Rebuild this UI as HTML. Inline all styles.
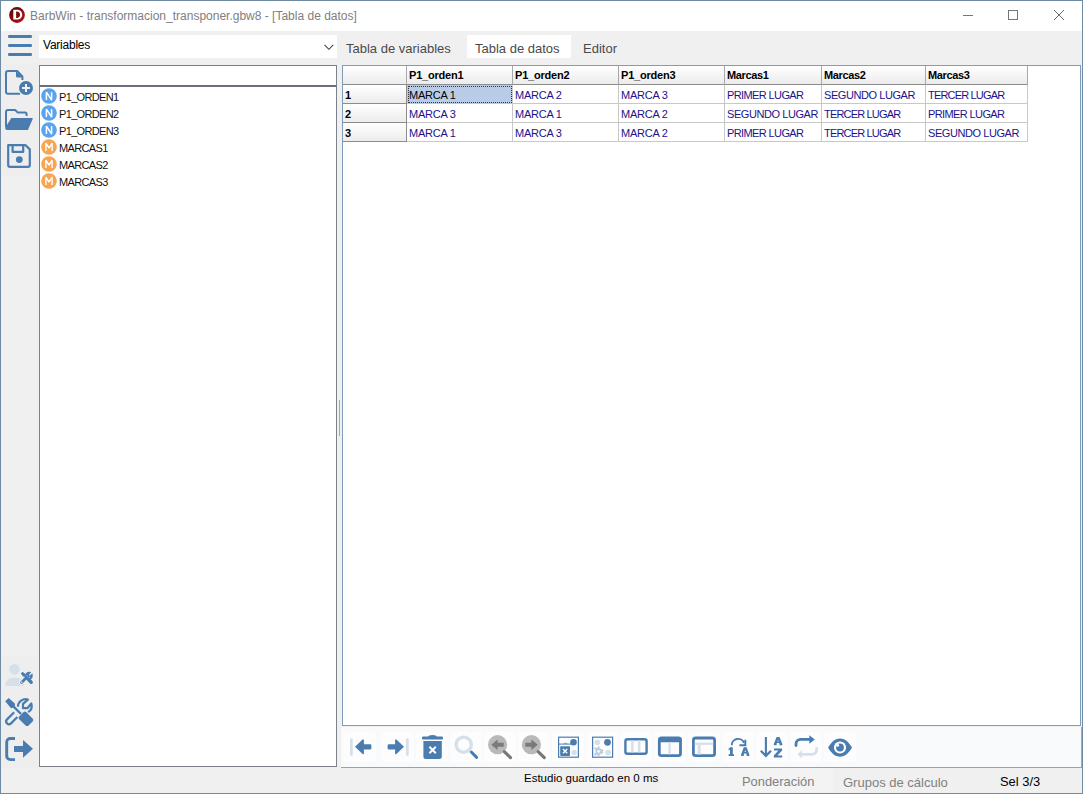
<!DOCTYPE html>
<html><head><meta charset="utf-8">
<style>
*{margin:0;padding:0;box-sizing:border-box}
html,body{width:1083px;height:794px;overflow:hidden;background:#f0f0f0;font-family:"Liberation Sans",sans-serif;position:relative}
.a{position:absolute}
.t{position:absolute;white-space:nowrap;line-height:1}
#win{left:0;top:0;width:1083px;height:794px;border:1px solid #6f8aa3;}
#title{left:1px;top:1px;width:1081px;height:30px;background:#fff}
.hb{left:8px;width:24px;height:2.5px;background:#4a7cb0;border-radius:1.25px}
#dd{left:39px;top:35px;width:298px;height:23px;background:#fff}
#search{left:39px;top:65px;width:298px;height:22px;background:#fff;border:1px solid #7c818a;border-bottom:2px solid #6d7078}
#list{left:39px;top:87px;width:298px;height:680px;background:#fff;border:1px solid #7c818a;border-top:none}
#grid{left:342px;top:65px;width:739px;height:661px;background:#fff;border:1px solid #7f9db9}
#tabact{left:467px;top:35px;width:104px;height:23px;background:#fff}
#tbar{left:341px;top:727px;width:741px;height:41px;background:#f8fafc;border-bottom:1px solid #a0a0a0;border-right:1px solid #a8a8a8}
.btn{top:732px;width:32px;height:30px;background:#fcfdfd;border-radius:2px}
.ic{position:absolute}
.li{left:41px;width:16px;height:16px;border-radius:50%;color:#fff;font-weight:normal;font-size:11px;text-align:center;line-height:16px}
.ln{background:#5aa4ee}
.lm{background:#f7a553}
.lt{left:59px;font-size:11px;color:#111;letter-spacing:-0.65px}
.hd{position:absolute;top:66px;height:19px;background:linear-gradient(#ffffff,#ececec);border-right:1px solid #a8a8a8;border-bottom:1px solid #8c8c8c;font-weight:bold;font-size:11px;color:#000;padding-left:2px;line-height:18px;letter-spacing:-0.25px}
.rh{position:absolute;left:343px;width:64px;height:19px;background:linear-gradient(#ffffff,#ececec);border-right:1px solid #8c8c8c;border-bottom:1px solid #8c8c8c;font-weight:bold;font-size:11px;color:#000;padding-left:2px;padding-top:1px;line-height:19px}
.c{position:absolute;height:19px;border-right:1px solid #c8c8c8;border-bottom:1px solid #c8c8c8;font-size:11px;color:#1c128c;padding-left:2px;padding-top:1px;line-height:19px;letter-spacing:-0.5px;white-space:nowrap;overflow:hidden}
.sel{background:#b8cce8;color:#000}
.sel::after{content:"";position:absolute;left:1px;top:1px;right:0;bottom:0;border:1px dotted #333}
</style></head><body>
<div id="title" class="a"></div>
<div class="a" style="left:1px;top:63px;width:37px;height:112px;background:#eeeeee"></div>
<div class="a" style="left:1px;top:657px;width:37px;height:111px;background:#eeeeee"></div>
<!-- logo -->
<svg class="a" style="left:8px;top:6px" width="18" height="18" viewBox="0 0 18 18">
<defs><linearGradient id="lg" x1="0" y1="0" x2="1" y2="1"><stop offset="0" stop-color="#4a0508"/><stop offset="0.5" stop-color="#8a0a10"/><stop offset="1" stop-color="#c8141c"/></linearGradient></defs>
<circle cx="9" cy="9" r="7.9" fill="url(#lg)"/>
<path d="M5.3 3.8H8.8C12 3.8 14.2 5.8 14.2 8.7C14.2 11.6 12 13.6 8.8 13.6H5.3Z" fill="#fff"/>
<path d="M8.1 5.6H8.8C10.8 5.6 12.1 6.9 12.1 8.75C12.1 10.6 10.8 11.9 8.8 11.9H8.1Z" fill="#7a0a0e"/>
</svg>
<div class="t" style="left:30px;top:10px;font-size:12px;color:#808080">BarbWin - transformacion_transponer.gbw8 - [Tabla de datos]</div>
<!-- window controls -->
<div class="a" style="left:963px;top:15px;width:10px;height:1px;background:#767676"></div>
<div class="a" style="left:1008px;top:10px;width:10px;height:10px;border:1px solid #767676"></div>
<svg class="a" style="left:1054px;top:10px" width="10" height="10"><path d="M0 0L10 10M10 0L0 10" stroke="#6a6a6a" stroke-width="1"/></svg>

<!-- hamburger -->
<div class="a hb" style="top:35.4px"></div>
<div class="a hb" style="top:44.4px"></div>
<div class="a hb" style="top:53px"></div>

<div id="dd" class="a"></div>
<div class="t" style="left:43px;top:39px;font-size:12px;color:#000;letter-spacing:-0.23px">Variables</div>
<svg class="a" style="left:324px;top:44px" width="10" height="7"><path d="M0.5 0.8L4.9 5.3L9.3 0.8" stroke="#444" stroke-width="1.1" fill="none"/></svg>

<div id="search" class="a"></div>
<div id="list" class="a"></div>

<svg class="a" style="left:0;top:0" width="340" height="200" viewBox="0 0 340 200">
<circle cx="49" cy="96" r="7.8" fill="#5aa4ee"/><path d="M46.4 100V92.2L51.6 100V92.2" fill="none" stroke="#fff" stroke-width="1.5" stroke-linejoin="bevel"/>
<circle cx="49" cy="113" r="7.8" fill="#5aa4ee"/><path d="M46.4 117V109.2L51.6 117V109.2" fill="none" stroke="#fff" stroke-width="1.5" stroke-linejoin="bevel"/>
<circle cx="49" cy="130" r="7.8" fill="#5aa4ee"/><path d="M46.4 134V126.2L51.6 134V126.2" fill="none" stroke="#fff" stroke-width="1.5" stroke-linejoin="bevel"/>
<circle cx="49" cy="147" r="7.8" fill="#f7a553"/><path d="M45.9 151V143.2L49 148L52.1 143.2V151" fill="none" stroke="#fff" stroke-width="1.4" stroke-linejoin="bevel"/>
<circle cx="49" cy="164" r="7.8" fill="#f7a553"/><path d="M45.9 168V160.2L49 165L52.1 160.2V168" fill="none" stroke="#fff" stroke-width="1.4" stroke-linejoin="bevel"/>
<circle cx="49" cy="181" r="7.8" fill="#f7a553"/><path d="M45.9 185V177.2L49 182L52.1 177.2V185" fill="none" stroke="#fff" stroke-width="1.4" stroke-linejoin="bevel"/>
</svg>
<!-- tabs -->
<div id="tabact" class="a"></div>
<div class="t" style="left:346px;top:42px;font-size:13px;color:#4a4a4a">Tabla de variables</div>
<div class="t" style="left:475px;top:42px;font-size:13px;color:#4a4a4a">Tabla de datos</div>
<div class="t" style="left:583px;top:42px;font-size:13px;color:#4a4a4a">Editor</div>

<div class="a" style="left:1px;top:768px;width:1081px;height:25px;background:#f0f0f0"></div>
<div class="a" style="left:660px;top:768px;width:173px;height:25px;background:#f3f3f3"></div>
<div class="t" style="left:524px;top:773px;font-size:11.5px;color:#000">Estudio guardado en 0 ms</div>
<div class="t" style="left:742px;top:776px;font-size:12.9px;color:#808080">Ponderación</div>
<div class="t" style="left:843px;top:776px;font-size:13px;color:#808080">Grupos de cálculo</div>
<div class="t" style="left:1000px;top:776px;font-size:12.9px;color:#000">Sel 3/3</div>
<div id="grid" class="a"></div>
<div class="a" style="left:339px;top:400px;width:1px;height:36px;background:#a8a8a8"></div>
<div id="tbar" class="a"></div>
<div class="t lt" style="top:92px">P1_ORDEN1</div>
<div class="t lt" style="top:109px">P1_ORDEN2</div>
<div class="t lt" style="top:126px">P1_ORDEN3</div>
<div class="t lt" style="top:143px">MARCAS1</div>
<div class="t lt" style="top:160px">MARCAS2</div>
<div class="t lt" style="top:177px">MARCAS3</div>
<div class="hd" style="left:343px;width:64px"></div>
<div class="hd" style="left:407px;width:106px;letter-spacing:-0.2px">P1_orden1</div>
<div class="hd" style="left:513px;width:106px;letter-spacing:-0.2px">P1_orden2</div>
<div class="hd" style="left:619px;width:106px;letter-spacing:-0.2px">P1_orden3</div>
<div class="hd" style="left:725px;width:97px;letter-spacing:-0.34px">Marcas1</div>
<div class="hd" style="left:822px;width:104px;letter-spacing:-0.34px">Marcas2</div>
<div class="hd" style="left:926px;width:102px;letter-spacing:-0.34px">Marcas3</div>
<div class="rh" style="top:85px">1</div>
<div class="c sel" style="left:407px;top:85px;width:106px;letter-spacing:-0.24px">MARCA 1</div>
<div class="c" style="left:513px;top:85px;width:106px;letter-spacing:-0.24px">MARCA 2</div>
<div class="c" style="left:619px;top:85px;width:106px;letter-spacing:-0.24px">MARCA 3</div>
<div class="c" style="left:725px;top:85px;width:97px;letter-spacing:-0.61px">PRIMER LUGAR</div>
<div class="c" style="left:822px;top:85px;width:104px;letter-spacing:-0.43px">SEGUNDO LUGAR</div>
<div class="c" style="left:926px;top:85px;width:102px;letter-spacing:-0.82px">TERCER LUGAR</div>
<div class="rh" style="top:104px">2</div>
<div class="c" style="left:407px;top:104px;width:106px;letter-spacing:-0.24px">MARCA 3</div>
<div class="c" style="left:513px;top:104px;width:106px;letter-spacing:-0.24px">MARCA 1</div>
<div class="c" style="left:619px;top:104px;width:106px;letter-spacing:-0.24px">MARCA 2</div>
<div class="c" style="left:725px;top:104px;width:97px;letter-spacing:-0.43px">SEGUNDO LUGAR</div>
<div class="c" style="left:822px;top:104px;width:104px;letter-spacing:-0.82px">TERCER LUGAR</div>
<div class="c" style="left:926px;top:104px;width:102px;letter-spacing:-0.61px">PRIMER LUGAR</div>
<div class="rh" style="top:123px">3</div>
<div class="c" style="left:407px;top:123px;width:106px;letter-spacing:-0.24px">MARCA 1</div>
<div class="c" style="left:513px;top:123px;width:106px;letter-spacing:-0.24px">MARCA 3</div>
<div class="c" style="left:619px;top:123px;width:106px;letter-spacing:-0.24px">MARCA 2</div>
<div class="c" style="left:725px;top:123px;width:97px;letter-spacing:-0.61px">PRIMER LUGAR</div>
<div class="c" style="left:822px;top:123px;width:104px;letter-spacing:-0.82px">TERCER LUGAR</div>
<div class="c" style="left:926px;top:123px;width:102px;letter-spacing:-0.43px">SEGUNDO LUGAR</div>
<svg class="a" style="left:0;top:0" width="1083" height="794" viewBox="0 0 1083 794">
<!-- left toolbar -->
<g fill="none" stroke="#4a7cb0" stroke-width="2" stroke-linejoin="round">
<path d="M20 93.8H8a2 2 0 0 1-2-2V73a2 2 0 0 1 2-2H17.2L22.4 76.5V80"/>
<path d="M6 127V112a2 2 0 0 1 2-2H15.2L17.8 112.6H25a1.6 1.6 0 0 1 1.6 1.6V116"/>
<path d="M8.2 145.2H25.6L29.8 149.4V165a1.8 1.8 0 0 1-1.8 1.8H10a1.8 1.8 0 0 1-1.8-1.8Z" stroke-width="2.2"/>
<path d="M12.6 145.2V151.9H23.2V145.2" stroke-width="2.2"/>
</g>
<g fill="#4a7cb0">
<path d="M16 71.2V76a1.6 1.6 0 0 0 1.6 1.6H23.2Z"/>
<circle cx="26" cy="88" r="7.6" stroke="#f0f0f0" stroke-width="1.2"/>
<path d="M5.3 127.5L11.3 118H32a0.8 0.8 0 0 1 0.7 1.1L27.9 130H7a1.8 1.8 0 0 1-1.8-1.8Z"/>
<circle cx="19.3" cy="159.6" r="3.4"/>
</g>
<path d="M22 88H30M26 84V92" stroke="#f0f0f0" stroke-width="2"/>
<!-- user tools -->
<g fill="#d6e0eb"><circle cx="14.5" cy="669.3" r="5.4"/><path d="M5 686C5 680.5 9 677.4 14.5 677.4S24 680.5 24 686Z"/></g>
<g fill="none" stroke="#f0f0f0" stroke-width="5" stroke-linecap="round"><path d="M22 673.5L31.3 682.3M21.4 682.6L28 676"/></g>
<g fill="#4a7cb0">
<path d="M20.8 673.6L22.6 671.8L25.8 674.6L25.2 676.6L23 676.6Z"/>
</g>
<g stroke="#4a7cb0" fill="none" stroke-linecap="round">
<path d="M24.5 675.5L27 678" stroke-width="1.3"/>
<path d="M27.4 678.4L31.2 682.2" stroke-width="3.4"/>
<path d="M21.6 682.4L26.2 677.8" stroke-width="2.8"/>
<path d="M26.2 677.6A3.4 3.4 0 0 1 29.6 672.6L28 674.8L28.4 676.2L30 676.6L31.8 675A3.4 3.4 0 0 1 28.2 679.2" stroke-width="1.8" stroke-linecap="butt"/>
</g>
<circle cx="21.8" cy="682.2" r="0.8" fill="#f0f0f0"/>
<!-- tools big -->
<g fill="#4a7cb0">
<path d="M5.2 701.3L8.6 698.1L14.9 703.6L14.9 707L11 708.3Z"/>
<path d="M13 706L21 714" stroke="#4a7cb0" stroke-width="2.4"/>
<path d="M19.2 716.4L23.4 712.2a2.2 2.2 0 0 1 3 0L32.6 718.4a2.2 2.2 0 0 1 0 3L28.6 725.4a2.2 2.2 0 0 1-3 0L19.2 719.2a2 2 0 0 1 0-2.8Z"/>
</g>
<g fill="none" stroke="#4a7cb0" stroke-width="2.2" stroke-linecap="butt" stroke-linejoin="round">
<path d="M14.2 712.2L7 719.4a2.8 2.8 0 0 0 4 4L17.4 717"/>
<path d="M17.9 706.6A7.6 7.6 0 0 1 27.9 699.6L23 703.8V708.2H27.4L31.3 703.5A7.6 7.6 0 0 1 28.2 712.2"/>
</g>
<!-- exit -->
<path d="M15 738.5H10.3a3.6 3.6 0 0 0-3.6 3.6V756a3.6 3.6 0 0 0 3.6 3.6H15" fill="none" stroke="#4a7cb0" stroke-width="2.9"/>
<path d="M14 745.9H23V739.9L33 748.8L23 757.7V751.9H14Z" fill="#4a7cb0"/>

<!-- bottom toolbar buttons bg -->
<g fill="#fdfdfe">
<rect x="344" y="732" width="32" height="30" rx="3"/><rect x="382" y="732" width="32" height="30" rx="3"/><rect x="416" y="732" width="32" height="30" rx="3"/>
<rect x="450" y="732" width="32" height="30" rx="3"/><rect x="484" y="732" width="32" height="30" rx="3"/><rect x="518" y="732" width="32" height="30" rx="3"/>
<rect x="552" y="732" width="32" height="30" rx="3"/><rect x="586" y="732" width="32" height="30" rx="3"/><rect x="620" y="732" width="32" height="30" rx="3"/>
<rect x="654" y="732" width="32" height="30" rx="3"/><rect x="688" y="732" width="32" height="30" rx="3"/><rect x="722" y="732" width="32" height="30" rx="3"/>
<rect x="756" y="732" width="32" height="30" rx="3"/><rect x="790" y="732" width="32" height="30" rx="3"/><rect x="824" y="732" width="32" height="30" rx="3"/>
</g>
<!-- 1 first -->
<rect x="350" y="738.3" width="2.8" height="17.7" rx="1.4" fill="#d6e0eb"/>
<path d="M355 746.8L362.6 739.5a0.8 0.8 0 0 1 1.3 0.6V744.2H370a1.4 1.4 0 0 1 1.4 1.4V748.2a1.4 1.4 0 0 1-1.4 1.4H363.9V753.5a0.8 0.8 0 0 1-1.3 0.6Z" fill="#4a7cb0"/>
<!-- 2 last -->
<rect x="406" y="738.3" width="2.8" height="17.7" rx="1.4" fill="#d6e0eb"/>
<path d="M404 746.8L396.4 739.5a0.8 0.8 0 0 0-1.3 0.6V744.2H389a1.4 1.4 0 0 0-1.4 1.4V748.2a1.4 1.4 0 0 0 1.4 1.4H395.1V753.5a0.8 0.8 0 0 0 1.3 0.6Z" fill="#4a7cb0"/>
<!-- 3 trash -->
<g fill="#4a7cb0">
<rect x="422" y="736.6" width="21" height="2.8" rx="1.2"/>
<path d="M428 737.2Q428.5 735 432.5 735T437 737.2Z"/>
<path d="M423.4 741H441.8V756.8a2.2 2.2 0 0 1-2.2 2.2H425.6a2.2 2.2 0 0 1-2.2-2.2Z"/>
</g>
<path d="M429.4 746.8L435.8 753.2M435.8 746.8L429.4 753.2" stroke="#fff" stroke-width="2"/>
<!-- 4 magnifier light -->
<circle cx="463.7" cy="744.7" r="7.6" fill="none" stroke="#d6e0eb" stroke-width="3.4"/>
<path d="M471.3 752L476.6 757.4" stroke="#4a7cb0" stroke-width="3" stroke-linecap="round"/>
<!-- 5 mag left -->
<circle cx="497.6" cy="744.7" r="9.6" fill="#b9b9b9"/>
<path d="M504.3 751.6L510.5 757.6" stroke="#777" stroke-width="3.2" stroke-linecap="round"/>
<path d="M491.3 744.7L497.6 739.5V742.7H503.7V746.7H497.6V750Z" fill="#7a7a7a"/>
<!-- 6 mag right -->
<circle cx="531.4" cy="744.7" r="9.6" fill="#b9b9b9"/>
<path d="M538.1 751.6L544.3 757.6" stroke="#777" stroke-width="3.2" stroke-linecap="round"/>
<path d="M537.8 744.7L531.4 739.5V742.7H525.3V746.7H531.4V750Z" fill="#7a7a7a"/>
<!-- 7 grid trash -->
<rect x="558.6" y="737.2" width="19.8" height="20" fill="none" stroke="#4a7cb0" stroke-width="1.2"/>
<circle cx="573.5" cy="742.3" r="3.3" fill="#4a7cb0"/>
<circle cx="574.1" cy="752.4" r="2.7" fill="#d6e0eb"/>
<path d="M559 744.1H572" stroke="#4a7cb0" stroke-width="1"/>
<path d="M563 743.6Q565.5 742 568 743.6Z" fill="#4a7cb0"/>
<path d="M560.2 746.2H570V755a1 1 0 0 1-1 1H561.2a1 1 0 0 1-1-1Z" fill="#4a7cb0"/>
<path d="M563 749L567.2 753.2M567.2 749L563 753.2" stroke="#fff" stroke-width="1.4"/>
<!-- 8 grid gear -->
<rect x="592.6" y="737.2" width="20" height="20" fill="none" stroke="#4a7cb0" stroke-width="1.2"/>
<circle cx="597.4" cy="742.3" r="2.8" fill="#d6e0eb"/>
<circle cx="607.5" cy="742.3" r="3.4" fill="#4a7cb0"/>
<circle cx="608.1" cy="752.4" r="2.8" fill="#d6e0eb"/>
<g fill="#bccbdd"><circle cx="598.6" cy="751.4" r="3.2"/><path d="M597.6 746.4h2v10h-2zM593.9 748.8l1-1.7 8.6 5-1 1.7zM593.9 754l1 1.7 8.6-5-1-1.7z"/></g>
<circle cx="598.6" cy="751.4" r="1.3" fill="#fdfdfe"/>
<!-- 9 columns -->
<rect x="625.4" y="739.2" width="21.2" height="14.5" rx="2" fill="none" stroke="#4a7cb0" stroke-width="2.4"/>
<rect x="631.1" y="740.4" width="2.4" height="12" fill="#d6e0eb"/><rect x="638" y="740.4" width="2.4" height="12" fill="#d6e0eb"/>
<!-- 10 table header -->
<rect x="659.3" y="738" width="21.2" height="17.7" rx="2.2" fill="none" stroke="#4a7cb0" stroke-width="2.8"/>
<rect x="658.5" y="737" width="23" height="5.2" rx="2" fill="#4a7cb0"/>
<rect x="668.5" y="742.2" width="2.3" height="12.2" fill="#d6e0eb"/>
<!-- 11 table light -->
<rect x="693.4" y="738" width="21.2" height="17.7" rx="2.2" fill="none" stroke="#4a7cb0" stroke-width="2.8"/>
<rect x="694.8" y="742.6" width="18.4" height="2.3" fill="#d6e0eb"/>
<rect x="697.6" y="744.9" width="3" height="9.6" fill="#d6e0eb"/>
<!-- 12 1A -->
<g fill="#4a7cb0">
<path d="M730.2 747.2H732.8V754.3H734V755.9H728.6V754.3H730V749.6L728.6 750.4V748.8Z"/>
<path d="M743.8 747.2H746.6L749.3 754.4V755.9H746.6V754.5L746.2 753.4H744.2L743.8 754.5V755.9H741.1V754.4ZM744.6 752H745.8L745.2 750Z"/>
</g>
<path d="M731.8 745.3A6.3 6 0 0 1 744 742.8" fill="none" stroke="#4a7cb0" stroke-width="1.9"/>
<path d="M745.3 739.8V745.3H739.4" fill="none" stroke="#4a7cb0" stroke-width="2"/>
<!-- 13 AZ -->
<path d="M765.9 737V755.5" stroke="#4a7cb0" stroke-width="2.1"/>
<path d="M760.8 750.8L765.9 755.9L771 750.8" fill="none" stroke="#4a7cb0" stroke-width="2.2"/>
<g fill="#4a7cb0">
<path d="M776.6 737H779.5L782.3 744V745.2H779.5V744L779.1 743H777L776.6 744V745.2H773.8V744ZM777.5 741.5H778.6L778 739.6Z"/>
<path d="M774 748.6H782.1V750.6L777.5 755.4H782.2V757.4H773.8V755.4L778.4 750.6H774Z"/>
</g>
<!-- 14 repeat -->
<path d="M796 745.5V744a4.6 4.6 0 0 1 4.6-4.6H810" fill="none" stroke="#4a7cb0" stroke-width="2.8" stroke-linecap="round"/>
<path d="M809.3 735.2L814.8 739.5L809.3 743.7Z" fill="#4a7cb0"/>
<path d="M816.6 748.3V749.7a4.6 4.6 0 0 1-4.6 4.6H802" fill="none" stroke="#d6e0eb" stroke-width="2.8" stroke-linecap="round"/>
<path d="M801.9 750.1L797.4 754.3L801.9 758.5Z" fill="#d6e0eb"/>
<!-- 15 eye -->
<path d="M828.1 747.6C831.5 741.5 835.5 738.4 840 738.4S848.5 741.5 852 747.6C848.5 753.7 844.5 756.8 840 756.8S831.5 753.7 828.1 747.6Z" fill="#4a7cb0"/>
<circle cx="840" cy="747.5" r="6.1" fill="#fff"/>
<circle cx="840" cy="747.5" r="3.9" fill="#4a7cb0"/>
<circle cx="837.6" cy="745.3" r="1.5" fill="#fff"/>
</svg>
<!--END-->
<div id="win" class="a"></div>
</body></html>
